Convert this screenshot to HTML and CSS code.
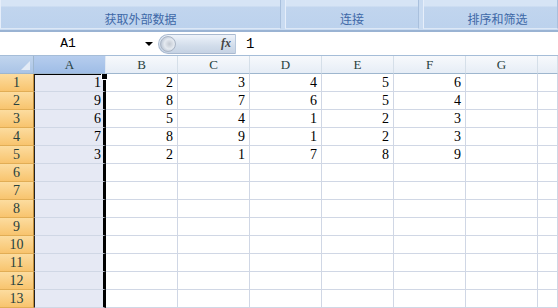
FILE: index.html
```html
<!DOCTYPE html>
<html lang="zh-CN">
<head>
    <meta charset="UTF-8">
    <title>Sheet1</title>
    <link rel="stylesheet" href="styles.css">
</head>
<body>
    <div class="ribbon">
        <div class="group g1"><span>获取外部数据</span></div>
        <div class="group g2"><span>连接</span></div>
        <div class="group g3"><span>排序和筛选</span></div>
    </div>

    <div class="formula-bar">
        <div class="name-box">
            <span class="name">A1</span>
            <span class="arrow"></span>
        </div>
        <div class="fx-btn"><span class="knob"></span><span class="fx">fx</span></div>
        <div class="formula">1</div>
    </div>

    <div class="sheet">
        <div class="corner"><span class="tri"></span></div>
        <div class="col-h sel">A</div>
        <div class="col-h">B</div>
        <div class="col-h">C</div>
        <div class="col-h">D</div>
        <div class="col-h">E</div>
        <div class="col-h">F</div>
        <div class="col-h">G</div>
        <div class="col-h"></div>
    </div>
    <div class="sheet body" id="rows"></div>

    <script>
        const data = [
            [1, 2, 3, 4, 5, 6],
            [9, 8, 7, 6, 5, 4],
            [6, 5, 4, 1, 2, 3],
            [7, 8, 9, 1, 2, 3],
            [3, 2, 1, 7, 8, 9]
        ];
        const rows = document.getElementById('rows');
        for (let r = 0; r < 13; r++) {
            let html = '<div class="row-h">' + (r + 1) + '</div>';
            for (let c = 0; c < 8; c++) {
                let v = (data[r] && data[r][c] !== undefined) ? data[r][c] : '';
                let cls = 'cell';
                if (c === 0) cls += ' col-a';
                if (c === 0 && r === 0) cls += ' top';
                html += '<div class="' + cls + '">' + v + '</div>';
            }
            rows.insertAdjacentHTML('beforeend', html);
        }
    </script>
</body>
</html>
```

FILE: styles.css
```css
body {
    margin: 0;
    width: 558px;
    height: 308px;
    overflow: hidden;
    background: #fff;
    font-family: "Liberation Serif", "Noto Sans CJK SC", serif;
}

/* ribbon group labels */
.ribbon {
    display: flex;
    height: 32px;
    background: #c9dbf1;
    border-bottom: 2px solid #9ab3d3;
    box-sizing: border-box;
}

.group {
    height: 29px;
    box-sizing: border-box;
    background: linear-gradient(#d6e4f5 0px, #d6e4f5 6px, #c1d5ee 7px, #bcd2ed 28px);
    border-left: 1px solid #e6eefa;
    border-right: 1px solid #a9c0dd;
    border-bottom: 1px solid #dde8f6;
    display: flex;
    align-items: center;
    justify-content: center;
    padding-top: 8px;
    color: #3d68a7;
    font-family: "Noto Sans CJK SC", sans-serif;
    font-size: 12px;
}

.g1 { width: 281px; }
.g2 { width: 134px; margin-left: 4px; }
.g3 { flex: 1; margin-left: 4px; padding-left: 14px; }

/* formula bar */
.formula-bar {
    display: flex;
    height: 24px;
    background: #fff;
    border-bottom: 1px solid #a5bdd8;
    box-sizing: border-box;
    align-items: center;
}

.name-box {
    width: 158px;
    height: 100%;
    position: relative;
    display: flex;
    align-items: center;
    justify-content: center;
    font-size: 13px;
    font-family: "Liberation Mono", monospace;
}

.name {
    margin-right: 22px;
}

.arrow {
    position: absolute;
    right: 5px;
    top: 10px;
    border-left: 4px solid transparent;
    border-right: 4px solid transparent;
    border-top: 4px solid #000;
}

.fx-btn {
    width: 78px;
    height: 20px;
    box-sizing: border-box;
    background: linear-gradient(#eef3fa, #d2ddeb 60%, #c6d3e4);
    border-radius: 10px 0 0 10px;
    border: 1px solid #a9b9cf;
    border-right: 1px solid #b8c8dc;
    display: flex;
    align-items: center;
    justify-content: space-between;
    padding-right: 4px;
}

.knob {
    width: 16px;
    height: 16px;
    border-radius: 50%;
    margin-left: 1px;
    background: radial-gradient(circle at 60% 50%, #c3c9d2 0, #e4e9f0 45%, #b9c4d3 80%);
    border: 1px solid #aab5c5;
    box-sizing: border-box;
}

.fx {
    font-style: italic;
    font-weight: bold;
    font-size: 12px;
    color: #444;
}

.formula {
    padding-left: 10px;
    font-size: 14px;
    font-family: "Liberation Mono", monospace;
}

/* grid */
.sheet {
    display: grid;
    grid-template-columns: 34px repeat(7, 72px) 1fr;
}

.corner,
.col-h {
    height: 18px;
    box-sizing: border-box;
    border-right: 1px solid #d5dfe9;
    border-bottom: 1px solid #9eb6ce;
    background: linear-gradient(#f7f9fc, #e6edf6);
    text-align: center;
    font-size: 13px;
    line-height: 18px;
    color: #27413e;
}

.corner {
    background: linear-gradient(#c1d5ee, #aac4e6);
    border-right: 1px solid #9eb6ce;
    position: relative;
}

.tri {
    position: absolute;
    right: 3px;
    bottom: 3px;
    border-left: 9px solid transparent;
    border-bottom: 9px solid #e3ebf6;
}

.col-h.sel {
    background: linear-gradient(#b6cdee, #9fbde6);
    border-right-color: #e0e8f3;
}

.row-h {
    height: 18px;
    box-sizing: border-box;
    background: linear-gradient(#fcdc9f, #f8c46e);
    border-bottom: 1px solid #e1ad55;
    border-right: 1px solid #c38f3a;
    text-align: center;
    font-size: 14px;
    line-height: 18px;
    color: #27413e;
}

.cell {
    height: 18px;
    box-sizing: border-box;
    border-right: 1px solid #d0d7e5;
    border-bottom: 1px solid #d0d7e5;
    text-align: right;
    padding-right: 4px;
    font-size: 14px;
    line-height: 18px;
    font-family: "Liberation Serif", serif;
}

.col-a {
    background: #e6e9f4;
    border-left: 1px solid #222;
    border-right: 3px solid #000;
    padding-right: 2px;
    position: relative;
}

.col-a.top {
    border-top: 1px solid #000;
    line-height: 16px;
}

.col-a.top::after {
    content: "";
    position: absolute;
    right: -5px;
    top: -1px;
    width: 5px;
    height: 5px;
    background: #000;
    border: 1px solid #fff;
    border-top: none;
}
```
